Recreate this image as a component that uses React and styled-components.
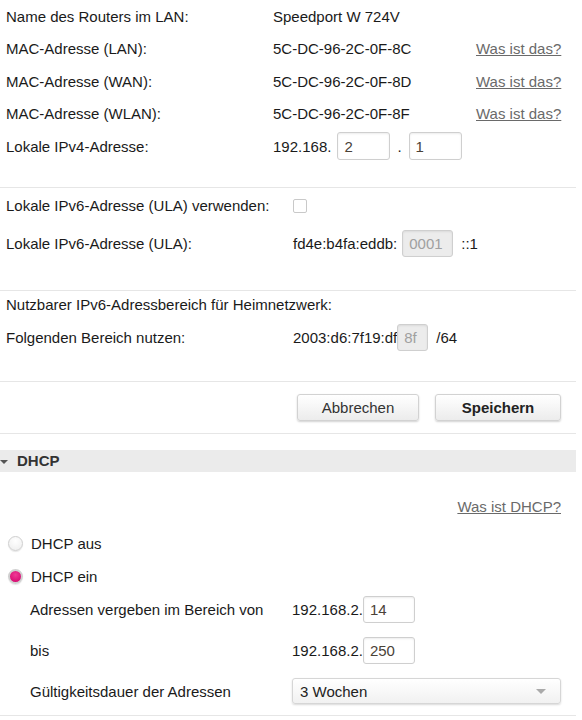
import React from "react";
import styled, { createGlobalStyle } from "styled-components";

const GlobalStyle = createGlobalStyle`
  body {
    margin: 0;
    background: #fff;
    font-family: "Liberation Sans", Arial, sans-serif;
    font-size: 15px;
    color: #1a1a1a;
  }
`;

const Page = styled.div`
  width: 576px;
`;

const Section = styled.div`
  padding: ${(p) => p.$pad || "0"};
  border-bottom: ${(p) => (p.$line ? "1px solid #e6e6e6" : "none")};
`;

const Row = styled.div`
  display: grid;
  grid-template-columns: ${(p) => p.$cols || "267px 203px auto"};
  align-items: center;
  height: ${(p) => p.$h || 32}px;
  margin-top: ${(p) => p.$mt || 0}px;
  padding-left: ${(p) => p.$indent || 6}px;
  white-space: nowrap;
`;

const Value = styled.div`
  display: flex;
  align-items: center;
`;

const Link = styled.a`
  color: #6a6a6a;
  text-decoration: underline;
  cursor: pointer;
`;

const Field = styled.input`
  box-sizing: border-box;
  width: ${(p) => p.$w || 52}px;
  height: ${(p) => p.$ht || 27}px;
  margin: 0 ${(p) => p.$mr || 0}px 0 ${(p) => p.$ml || 0}px;
  padding: 0 6px;
  border: 1px solid #cfcfcf;
  border-radius: 3px;
  box-shadow: inset 0 1px 2px rgba(0, 0, 0, 0.08);
  font-family: inherit;
  font-size: 15px;
  color: #4a4238;
  background: #fff;
  &:disabled {
    background: #ececec;
    color: #a0a0a0;
  }
`;

const Dot = styled.span`
  margin: 0 7px;
`;

const Check = styled.span`
  display: inline-block;
  box-sizing: border-box;
  width: 14px;
  height: 14px;
  border: 1px solid #c9c9c9;
  border-radius: 2px;
  background: #fff;
`;

const ButtonBar = styled.div`
  display: flex;
  justify-content: flex-end;
  gap: 16px;
  padding: 12px 15px 12px 0;
  border-bottom: 1px solid #e6e6e6;
`;

const Button = styled.button`
  box-sizing: border-box;
  width: ${(p) => p.$w}px;
  height: 27px;
  border: 1px solid #d2d2d2;
  border-radius: 3px;
  background: linear-gradient(#ffffff, #ececec);
  box-shadow: 0 1px 2px rgba(0, 0, 0, 0.18);
  font-family: inherit;
  font-size: 15px;
  font-weight: ${(p) => (p.$primary ? "bold" : "normal")};
  color: ${(p) => (p.$primary ? "#222" : "#333")};
`;

const Header = styled.div`
  display: flex;
  align-items: center;
  gap: 9px;
  height: 22px;
  margin-top: 16px;
  background: #ebebeb;
  font-weight: bold;
  color: #333;
`;

const Caret = styled.span`
  width: 0;
  height: 0;
  margin-left: 0;
  margin-top: 2px;
  border-left: 4px solid transparent;
  border-right: 4px solid transparent;
  border-top: 4px solid #555;
`;

const LinkRow = styled.div`
  display: flex;
  justify-content: flex-end;
  align-items: center;
  height: 32px;
  margin-top: 19px;
  padding-right: 15px;
`;

const RadioRow = styled.label`
  display: flex;
  align-items: center;
  gap: 8px;
  height: 33px;
  padding-left: 8px;
  margin-top: ${(p) => p.$mt || 0}px;
`;

const Radio = styled.span`
  box-sizing: border-box;
  width: 15px;
  height: 15px;
  border-radius: 50%;
  border: ${(p) => (p.$on ? "2px solid #d0d0d0" : "1px solid #cfcfcf")};
  background: ${(p) =>
    p.$on
      ? "radial-gradient(circle at 50% 35%, #f03a95, #d1006a)"
      : "radial-gradient(circle at 50% 30%, #ffffff, #ededed)"};
  box-shadow: 0 1px 1px rgba(0, 0, 0, 0.1);
`;

const Select = styled.div`
  box-sizing: border-box;
  display: flex;
  align-items: center;
  justify-content: space-between;
  width: 269px;
  height: 26px;
  padding: 0 14px 0 7px;
  border: 1px solid #d6d6d6;
  border-radius: 3px;
  background: linear-gradient(#ffffff, #f1f1f1);
  box-shadow: 0 1px 2px rgba(0, 0, 0, 0.15);
  color: #222;
`;

const SelectArrow = styled.span`
  width: 0;
  height: 0;
  border-left: 5px solid transparent;
  border-right: 5px solid transparent;
  border-top: 5px solid #aaa;
`;

const macRows = [
  ["MAC-Adresse (LAN):", "5C-DC-96-2C-0F-8C"],
  ["MAC-Adresse (WAN):", "5C-DC-96-2C-0F-8D"],
  ["MAC-Adresse (WLAN):", "5C-DC-96-2C-0F-8F"],
];

export default function App() {
  return (
    <Page>
      <GlobalStyle />
      <Section $pad="0 0 24px" $line>
        <Row $h={32.5}>
          <span>Name des Routers im LAN:</span>
          <span>Speedport W 724V</span>
        </Row>
        {macRows.map(([label, mac]) => (
          <Row key={label} $h={32.5}>
            <span>{label}</span>
            <span>{mac}</span>
            <Link>Was ist das?</Link>
          </Row>
        ))}
        <Row $h={32.5}>
          <span>Lokale IPv4-Adresse:</span>
          <Value>
            192.168.
            <Field $w={53} $ht={28} $ml={6} defaultValue="2" />
            <Dot>.</Dot>
            <Field $w={53} $ht={28} defaultValue="1" />
          </Value>
        </Row>
      </Section>

      <Section $pad="2px 0 30px" $line>
        <Row $cols="287px auto">
          <span>Lokale IPv6-Adresse (ULA) verwenden:</span>
          <Value>
            <Check />
          </Value>
        </Row>
        <Row $cols="287px auto" $mt={6}>
          <span>Lokale IPv6-Adresse (ULA):</span>
          <Value>
            fd4e:b4fa:eddb:
            <Field $w={51} $ml={5} $mr={8} disabled defaultValue="0001" />
            ::1
          </Value>
        </Row>
      </Section>

      <Section $pad="0 0 24px" $line>
        <Row $cols="287px auto" $h={28}>
          <span>Nutzbarer IPv6-Adressbereich für Heimnetzwerk:</span>
        </Row>
        <Row $cols="287px auto" $h={38}>
          <span>Folgenden Bereich nutzen:</span>
          <Value>
            2003:d6:7f19:df
            <Field $w={31} $mr={8} disabled defaultValue="8f" />
            /64
          </Value>
        </Row>
      </Section>

      <ButtonBar>
        <Button $w={122}>Abbrechen</Button>
        <Button $w={126} $primary>
          Speichern
        </Button>
      </ButtonBar>

      <Header>
        <Caret />
        DHCP
      </Header>

      <Section $pad="0 0 7px" $line>
        <LinkRow>
          <Link>Was ist DHCP?</Link>
        </LinkRow>
        <RadioRow $mt={4}>
          <Radio />
          DHCP aus
        </RadioRow>
        <RadioRow>
          <Radio $on />
          DHCP ein
        </RadioRow>
        <Row $cols="262px auto" $indent={30} $h={33}>
          <span>Adressen vergeben im Bereich von</span>
          <Value>
            192.168.2.
            <Field $w={52} defaultValue="14" />
          </Value>
        </Row>
        <Row $cols="262px auto" $indent={30} $h={33} $mt={8}>
          <span>bis</span>
          <Value>
            192.168.2.
            <Field $w={52} defaultValue="250" />
          </Value>
        </Row>
        <Row $cols="262px auto" $indent={30} $h={33} $mt={8}>
          <span>Gültigkeitsdauer der Adressen</span>
          <Select>
            3 Wochen
            <SelectArrow />
          </Select>
        </Row>
      </Section>
    </Page>
  );
}
